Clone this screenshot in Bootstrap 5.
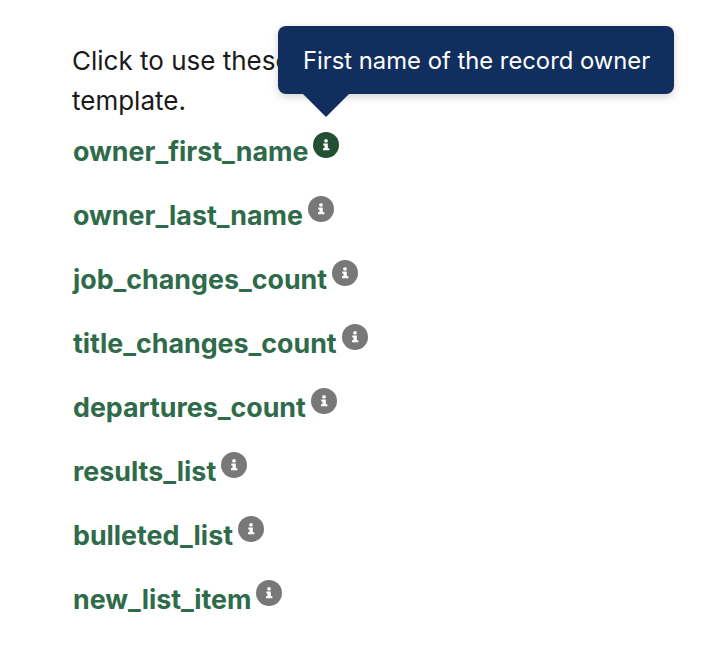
<!DOCTYPE html>
<html lang="en">
<head>
  <meta charset="UTF-8" />
  <meta name="viewport" content="width=device-width, initial-scale=1" />
  <title>Template variables</title>
  <link href="https://cdn.jsdelivr.net/npm/bootstrap@5.3.0/dist/css/bootstrap.min.css" rel="stylesheet" />
  <style>
    html, body {
      background: #fff;
      font-family: "Inter", "Liberation Sans", sans-serif;
    }
    .vars-panel {
      position: relative;
      padding: 41px 44px 0 72px;
    }
    .vars-intro {
      font-size: 26px;
      line-height: 40px;
      color: #1a1a1a;
      margin-bottom: 0;
    }
    .vars-list {
      gap: 29px;
      margin-top: 13px;
      padding-left: 1px;
    }
    .var-row {
      height: 35px;
    }
    .var-link {
      font-size: 26.8px;
      line-height: 35px;
      font-weight: 700;
      color: #2f6b4a;
      text-decoration: none;
    }
    .var-info {
      width: 26px;
      height: 26px;
      margin-left: 5px;
      margin-top: -2px;
      color: #787878;
      flex: none;
    }
    .var-info.is-active {
      color: #234f33;
    }
    .owner-tip {
      position: absolute;
      left: 278px;
      top: 26px;
      width: 396px;
      height: 68px;
      padding: 0 0 0 25px;
      background: #102e5e;
      color: #fff;
      font-size: 23.8px;
      line-height: 69px;
      border-radius: 8px;
      box-shadow: 0 3px 8px rgba(0,0,0,.18);
      white-space: nowrap;
    }
    .owner-tip::after {
      content: "";
      position: absolute;
      left: 25px;
      top: 68px;
      border-left: 23px solid transparent;
      border-right: 23px solid transparent;
      border-top: 23px solid #102e5e;
    }
  </style>
</head>
<body>
  <div class="vars-panel">
    <p class="vars-intro">Click to use these variables in your email template.</p>
    <div class="vars-list d-flex flex-column" id="varsList"></div>
    <div class="owner-tip">First name of the record owner</div>
  </div>
  <script>
    // rows of the variable list, first one is hovered
    const names = ["owner_first_name", "owner_last_name", "job_changes_count", "title_changes_count", "departures_count", "results_list", "bulleted_list", "new_list_item"];
    const list = document.getElementById("varsList");
    names.forEach((name, i) => {
      const row = document.createElement("div");
      row.className = "var-row d-flex align-items-start";
      row.innerHTML = `
        <a class="var-link" href="#">${name}</a>
        <svg class="var-info ${i === 0 ? "is-active" : ""}" viewBox="0 0 26 26">
          <circle cx="13" cy="13" r="13" fill="currentColor"/>
          <rect x="11.3" y="7.2" width="3.4" height="3.2" rx="1.2" fill="#fff"/>
          <path d="M10.3 11.6h4.5v4.6h1.6v2h-6.4v-2h1.5v-2.6h-1.2z" fill="#fff"/>
        </svg>`;
      list.appendChild(row);
    });
  </script>
  <script src="https://cdn.jsdelivr.net/npm/bootstrap@5.3.0/dist/js/bootstrap.bundle.min.js"></script>
</body>
</html>
